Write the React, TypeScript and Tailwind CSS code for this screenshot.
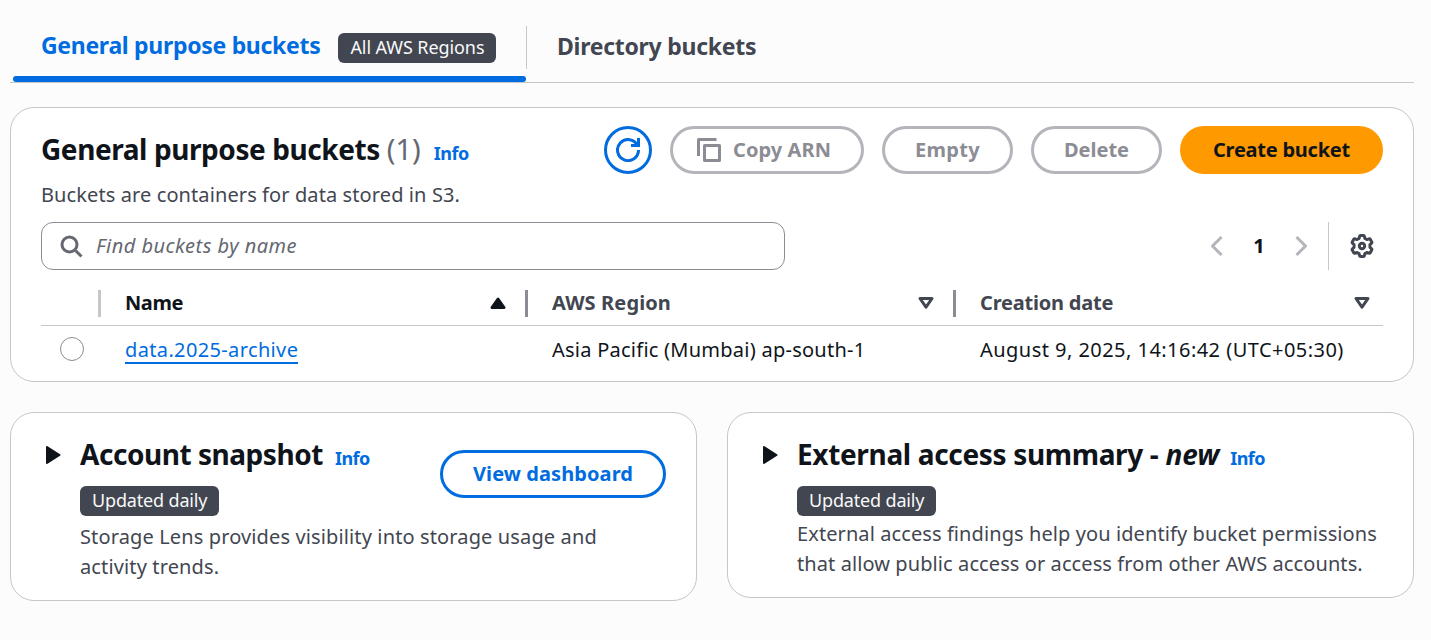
import type { ReactNode } from "react";

function Icon({ children, className = "" }: { children: ReactNode; className?: string }) {
  return (
    <svg viewBox="0 0 16 16" className={"h-6 w-6 shrink-0 " + className} fill="none" stroke="currentColor" strokeWidth={2} strokeLinejoin="round">
      {children}
    </svg>
  );
}

function Badge({ children, className = "" }: { children: ReactNode; className?: string }) {
  return (
    <span className={"flex h-[30px] items-center rounded-md bg-[#424650] px-3 text-[18px] leading-[28px] text-[#f9f9fa] " + className}>
      <span className="-mt-[2px] whitespace-nowrap">{children}</span>
    </span>
  );
}

function Button({ children, className = "" }: { children: ReactNode; className?: string }) {
  return (
    <button className={"flex h-12 shrink-0 items-center justify-center whitespace-nowrap rounded-full text-[20px] font-bold leading-[30px] " + className}>
      {children}
    </button>
  );
}

function Info({ className = "" }: { className?: string }) {
  return <a className={"text-[18px] font-bold tracking-[-0.5px] text-[#006ce0] " + className}>Info</a>;
}

function SortDown() {
  return (
    <Icon className="text-[#424650]">
      <path d="M4 5h8l-4 5.800z" />
    </Icon>
  );
}

function ExpandArrow() {
  return (
    <svg viewBox="0 0 15 18" className="mt-[33px] ml-[35px] h-[18px] w-[15px] shrink-0" fill="#0f141a" stroke="#0f141a" strokeWidth={2} strokeLinejoin="round">
      <path d="M1 1v16L13.500 9z" />
    </svg>
  );
}

export default function App() {
  return (
    <div className="flex h-[640px] w-[1431px] flex-col bg-[#fcfcfd] pl-[10px] pr-[17px] font-['Noto_Sans',sans-serif] text-[20px] leading-[30px] text-[#0f141a]">
      <nav className="flex h-[83px] shrink-0 border-b border-[#c6c6cd] text-[23px] font-bold">
        <div className="ml-[3px] flex w-[513px] flex-col">
          <div className="flex h-[76px] pl-7 pt-[33px] text-[#006ce0]">
            <span className="-mt-[3px] whitespace-nowrap tracking-[-0.3px]">General purpose buckets</span>
            <Badge className="ml-[18px] font-normal tracking-[-0.08px]">All AWS Regions</Badge>
          </div>
          <div className="h-[6px] rounded-full bg-[#006ce0]" />
        </div>
        <div className="mt-[26px] h-[43px] w-px bg-[#c6c6cd]" />
        <span className="ml-[30px] mt-[31px] tracking-[-0.27px] text-[#424650]">Directory buckets</span>
      </nav>

      <section className="mt-[24px] flex h-[275px] shrink-0 flex-col rounded-[24px] border border-[#c6c6cd] bg-white px-[30px] pt-[18px]">
        <div className="flex h-[96px] justify-between">
          <div>
            <h2 className="h-[46px] whitespace-nowrap text-[28px] font-bold leading-[46px] tracking-[-0.42px]">
              General purpose buckets <span className="text-[29px] font-normal tracking-normal text-[#656871]">(1)</span>
              <Info className="ml-[13px]" />
            </h2>
            <p className="mt-[8px] tracking-[0.1px] text-[#424650]">Buckets are containers for data stored in S3.</p>
          </div>
          <div className="flex gap-[18px]">
            <Button className="w-12 border-3 border-[#006ce0] text-[#006ce0]">
              <Icon>
                <path d="M10 5h5V0" strokeLinejoin="miter" />
                <path d="M15 8a7 7 0 1 1-.7-3" />
              </Icon>
            </Button>
            <Button className="w-[194px] gap-3 border-3 border-[#b4b4bb] pr-[6px] tracking-[0.07px] text-[#8c8c94]">
              <Icon>
                <path d="M1 12V1h12M5 5h10v10H5z" />
              </Icon>
              Copy ARN
            </Button>
            <Button className="w-[131px] border-3 border-[#b4b4bb] tracking-[0.3px] text-[#8c8c94]">Empty</Button>
            <Button className="w-[131px] border-3 border-[#b4b4bb] text-[#8c8c94]">Delete</Button>
            <Button className="w-[203px] bg-[#ff9900] tracking-[-0.24px]">Create bucket</Button>
          </div>
        </div>

        <div className="flex h-12 items-center">
          <div className="flex h-12 w-[744px] items-center rounded-xl border border-[#8c8c94] pl-[17px] text-[#656871]">
            <Icon>
              <circle cx="7" cy="7" r="5" />
              <path d="m11 11 4 4" />
            </Icon>
            <span className="ml-[13px] italic tracking-[0.48px]">Find buckets by name</span>
          </div>
          <div className="ml-auto flex h-12 items-center">
            <Icon className="text-[#b4b4bb]">
              <path d="M11 2 5 8l6 6" />
            </Icon>
            <span className="w-[60px] text-center font-bold">1</span>
            <Icon className="text-[#b4b4bb]">
              <path d="m5 2 6 6-6 6" />
            </Icon>
            <span className="ml-[15px] h-12 w-px bg-[#c6c6cd]" />
            <Icon className="ml-[21px] mr-[9px] text-[#424650]">
              <path d="M7 1h2q.5 0 .6.5l.3 1.400 1.400.8 1.400-.5q.5-.1.800.3l1 1.800q.2.400-.1.800L13.300 7.100v1.800l1.100 1q.3.400.1.800l-1 1.800q-.3.400-.8.300l-1.400-.5-1.400.8-.3 1.400q-.1.500-.6.500H7q-.5 0-.6-.5l-.3-1.400-1.400-.8-1.400.5q-.5.100-.8-.3l-1-1.800q-.2-.4.100-.8l1.100-1V7.100l-1.100-1q-.3-.4-.1-.8l1-1.800q.3-.4.800-.3l1.400.5 1.400-.8.3-1.400q.1-.5.6-.5z" />
              <circle cx="8" cy="8" r="1.800" />
            </Icon>
          </div>
        </div>

        <div className="flex h-[56px] shrink-0 items-start border-b border-[#c6c6cd] pt-[18px] font-bold text-[#424650]">
          <span className="ml-[57px] mt-[2px] h-[27px] w-[3px] bg-[#c6c6cd]" />
          <div className="flex w-[424px] items-center justify-between pl-6 pr-[15px] text-[#0f141a]">
            <span className="tracking-[-0.4px]">Name</span>
            <Icon>
              <path d="M8 5.400 4 11h8z" fill="currentColor" />
            </Icon>
          </div>
          <span className="mt-[2px] h-[27px] w-[3px] bg-[#8c8c94]" />
          <div className="flex w-[425px] items-center justify-between pl-6 pr-[15px] tracking-[0.12px]">
            <span>AWS Region</span>
            <SortDown />
          </div>
          <span className="mt-[2px] h-[27px] w-[3px] bg-[#8c8c94]" />
          <div className="flex flex-1 items-center justify-between pl-6 pr-[9px]">
            <span className="tracking-[-0.2px]">Creation date</span>
            <SortDown />
          </div>
        </div>

        <div className="flex pt-[9px]">
          <span className="ml-[19px] mt-[2px] h-6 w-6 rounded-full border-[1.5px] border-[#8c8c94]" />
          <div className="ml-[41px] w-[427px]">
            <a className="inline-block h-[29px] border-b-2 border-[#006ce0] tracking-[0.36px] text-[#006ce0]">data.2025-archive</a>
          </div>
          <span className="w-[428px] tracking-[0.25px]">Asia Pacific (Mumbai) ap-south-1</span>
          <span className="whitespace-nowrap tracking-[0.46px]">August 9, 2025, 14:16:42 (UTC+05:30)</span>
        </div>
      </section>

      <div className="mt-[30px] flex items-start gap-[30px]">
        <section className="flex h-[189px] w-[687px] rounded-[24px] border border-[#c6c6cd] bg-white">
          <ExpandArrow />
          <div className="ml-[19px] flex w-[530px] flex-col items-start pt-[20px]">
            <h2 className="h-[46px] whitespace-nowrap text-[28px] font-bold leading-[43px] tracking-[-0.46px]">
              Account snapshot<Info className="ml-[12px]" />
            </h2>
            <Badge className="mt-[7px] tracking-[-0.16px]">Updated daily</Badge>
            <p className="mt-[6px] whitespace-nowrap tracking-[0.13px] text-[#424650]">
              Storage Lens provides visibility into storage usage and
              <br />
              activity trends.
            </p>
          </div>
          <Button className="-ml-[170px] mt-[37px] w-[226px] border-3 border-[#006ce0] tracking-[0.09px] text-[#006ce0]">View dashboard</Button>
        </section>
        <section className="flex h-[186px] w-[687px] rounded-[24px] border border-[#c6c6cd] bg-white">
          <ExpandArrow />
          <div className="ml-[19px] flex flex-col items-start pt-[20px]">
            <h2 className="h-[46px] whitespace-nowrap text-[28px] font-bold leading-[43px] tracking-[-0.34px]">
              External access summary - <em className="tracking-[-0.1px]">new</em>
              <Info className="ml-[11px]" />
            </h2>
            <Badge className="mt-[7px] tracking-[-0.16px]">Updated daily</Badge>
            <p className="mt-[3px] whitespace-nowrap tracking-[0.09px] text-[#424650]">
              External access findings help you identify bucket permissions
              <br />
              that allow public access or access from other AWS accounts.
            </p>
          </div>
        </section>
      </div>
    </div>
  );
}
